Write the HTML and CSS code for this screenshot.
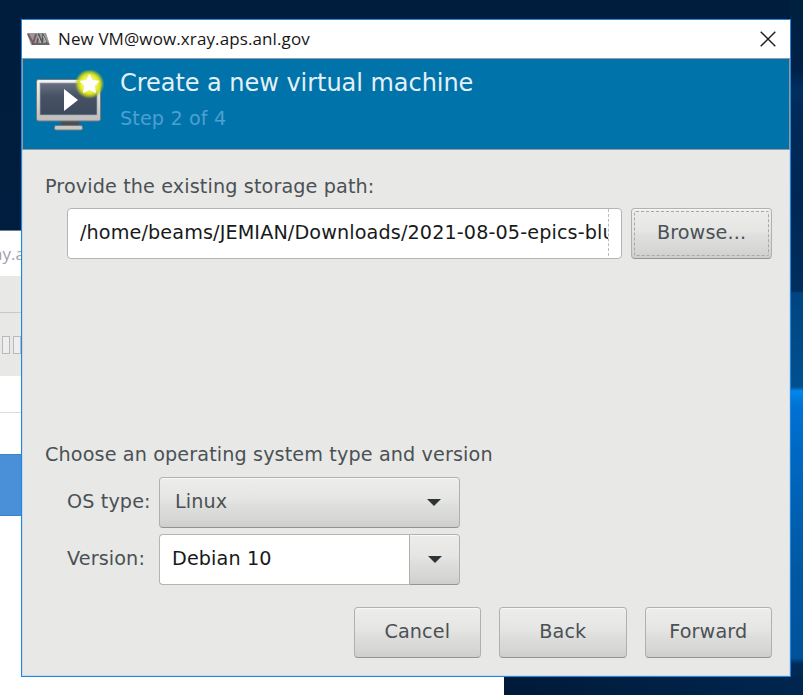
FILE: index.html
```
<!DOCTYPE html>
<html lang="en">
<head>
<meta charset="utf-8">
<title>New VM</title>
<link rel="stylesheet" href="styles.css">
</head>
<body>
<div class="desktop">
  <div class="back-window">
    <div class="back-title">ay.a</div>
    <div class="back-menu"></div>
    <div class="back-tools"><i></i><i></i></div>
    <div class="back-head"></div>
    <div class="back-gap"></div>
    <div class="back-selected"></div>
  </div>
  <main class="dialog">
    <div class="titlebar">
      <svg class="app-icon" width="24" height="14" viewBox="0 0 24 14">
        <path d="M0 1H19L23 13H4Z" fill="#999"/>
        <path d="M1 2L6 11L9 2" fill="none" stroke="#7c5a60" stroke-width="2"/>
        <path d="M10 11L12 3L15 11L16 3L20 11M5 12H22" fill="none" stroke="#555" stroke-width="1.5"/>
        <path d="M11 4L14 11M16 4L19 10" stroke="#c8c8c8" stroke-width="1"/>
      </svg>
      <span class="title-text">New VM@wow.xray.aps.anl.gov</span>
      <svg class="close" width="16" height="16" viewBox="0 0 16 16"><path d="M.7.7L15.3 15.3M15.3.7L.7 15.3" stroke="#1c1c1c" stroke-width="1.4"/></svg>
    </div>
    <header class="banner">
      <svg class="vm-icon" width="70" height="64" viewBox="0 0 70 64">
        <defs>
          <radialGradient id="glow"><stop offset=".45" stop-color="#f0f46a"/><stop offset=".66" stop-color="#dfe51c"/><stop offset=".8" stop-color="#c3d31e" stop-opacity=".75"/><stop offset="1" stop-color="#8dba38" stop-opacity="0"/></radialGradient>
          <linearGradient id="frame" x2="0" y2="1"><stop offset="0" stop-color="#f5f5f5"/><stop offset="1" stop-color="#bcbcbc"/></linearGradient>
          <linearGradient id="screen" x2="0" y2="1"><stop offset="0" stop-color="#687181"/><stop offset=".4" stop-color="#475365"/><stop offset="1" stop-color="#3d495c"/></linearGradient>
        </defs>
        <path d="M25 51H43V57H25Z" fill="#4d4f50"/>
        <rect x="18.500" y="55.500" width="28" height="4.500" rx="1.500" fill="#c8c8c8" stroke="#777"/>
        <rect x=".5" y="9.500" width="64" height="41.500" rx="2" fill="url(#frame)" stroke="#77797a"/>
        <rect x="4" y="13" width="57" height="32" fill="url(#screen)" stroke="#a0a5ac" stroke-width=".7"/>
        <path d="M28 19V41L42 30Z" fill="#fff"/>
        <circle cx="53.500" cy="14" r="15" fill="url(#glow)"/>
        <path d="M53.500 4.500L56.400 10.500L63 11.300L58.200 16L59.500 22.500L53.500 19.500L47.500 22.500L48.800 16L44 11.300L50.600 10.500Z" fill="#fff" stroke="#fff" stroke-width="1" stroke-linejoin="round"/>
      </svg>
      <div class="banner-copy"><h1>Create a new virtual machine</h1><p>Step 2 of 4</p></div>
    </header>
    <section class="content">
      <div class="caption">Provide the existing storage path:</div>
      <div class="path-row">
        <div class="entry path"><span class="clip">/home/beams/JEMIAN/Downloads/2021-08-05-epics-blue</span></div>
        <div class="button focused">Browse...</div>
      </div>
      <div class="caption os-caption">Choose an operating system type and version</div>
      <div class="field"><span class="label">OS type:</span><div class="button select"><span>Linux</span><svg width="14" height="7" viewBox="0 0 14 7"><path d="M0 0H14L7 7Z" fill="#2e3436"/></svg></div></div>
      <div class="field"><span class="label">Version:</span><div class="entry version">Debian 10</div><div class="button drop"><svg width="14" height="7" viewBox="0 0 14 7"><path d="M0 0H14L7 7Z" fill="#2e3436"/></svg></div></div>
      <div class="actions"><div class="button">Cancel</div><div class="button">Back</div><div class="button">Forward</div></div>
    </section>
  </main>
</div>
</body>
</html>
```
FILE: styles.css
```
* { box-sizing: border-box; }
body { margin: 0; font: 19.2px/22px "DejaVu Sans", sans-serif; letter-spacing: .12px; color: #4b5154; }
.desktop {
  position: relative; width: 803px; height: 695px; overflow: hidden;
  background:
    linear-gradient(#001d3d, #001f42) 0 0 / 790px 695px no-repeat,
    linear-gradient(#00203f 0, #002048 70px, #00305f 90px, #002a58 110px, #002753 200px, #002e5e 291px, #004580 293px, #00508f 387px, #0088ee 391px, #0072d4 405px, #0068c4 450px, #0058a2 570px, #00529a 658px, #002b56 664px, #00264c 695px);
}
.desktop::after { content: ""; position: absolute; left: 504px; top: 677px; width: 299px; height: 18px; background: linear-gradient(90deg, #001a38, #00264f); }
.back-window { position: absolute; left: 0; top: 230px; width: 504px; height: 465px; background: #fff; border-top: 1px solid #747d88; }
.back-title { height: 45px; padding-top: 13px; font: 17px/20px "Open Sans", sans-serif; letter-spacing: 0; color: #a1a1a9; margin-left: -7px; }
.back-menu { height: 37px; background: #e8e8e7; border-bottom: 1px solid #c9c9c9; }
.back-tools { height: 63px; background: #e8e8e7; display: flex; gap: 3px; padding: 23px 0 0 2px; }
.back-tools i { width: 8px; height: 18px; border: 1px solid #b9b9b9; background: #eee; }
.back-head { height: 37px; border-bottom: 1px solid #ddd; }
.back-gap { height: 41px; }
.back-selected { height: 62px; background: #4a90d9; border: 1px solid #3e82c9; border-width: 1px 0; }
.dialog { position: absolute; left: 21px; top: 19px; width: 770px; height: 658px; background: #e8e8e7; border: 1px solid #2386d8; box-shadow: inset 0 0 0 1px #c3dcf1; z-index: 1; }
.titlebar { height: 38px; background: #fff; display: flex; align-items: center; padding: 0 14px 0 5px; }
.app-icon { margin-right: 7px; }
.title-text { font: 17px/22px "Open Sans", sans-serif; letter-spacing: .11px; margin-top: -1px; color: #171717; white-space: nowrap; }
.close { margin-left: auto; margin-top: -1px; }
.banner { height: 92px; background: #0073aa; border: 1px solid #949b9f; display: flex; padding: 11px 0 0 13px; }
.vm-icon { margin-right: 14px; }
h1, p { margin: 0; font-weight: 400; white-space: nowrap; }
h1 { font-size: 24px; line-height: 28px; letter-spacing: -.04px; color: #e4f0f5; margin-top: -1px; }
.banner-copy p { line-height: 22px; margin-top: 11px; color: #4da0d0; }
.content { padding: 26px 18px 0 23px; }
.caption { height: 22px; white-space: nowrap; }
.path-row { display: flex; gap: 9px; padding-left: 22px; margin-top: 10px; }
.entry, .button { height: 51px; border: 1px solid #b4b4b1; border-radius: 4px; display: flex; align-items: center; padding-bottom: 2px; }
.entry { background: #fff; color: #171a1b; }
.path { width: 555px; padding-left: 12px; }
.clip { width: 529px; height: 47px; line-height: 47px; overflow: hidden; white-space: nowrap; border-right: 1px dashed #bbb; }
.button { justify-content: center; background: linear-gradient(#ededec, #e5e5e4 45%, #dfdfde 55%, #d6d6d5 84%, #cececd); border-color: #b2b2af #b0b0ad #949491; box-shadow: inset 0 1px #f8f8f8; }
.focused { width: 141px; position: relative; }
.focused::after { content: ""; position: absolute; inset: 2px; border: 1px dashed #a8a8a6; border-radius: 2px; }
.os-caption { margin-top: 185px; margin-bottom: 11px; }
.field { display: flex; padding-left: 22px; height: 57px; }
.label { width: 92px; line-height: 50px; white-space: nowrap; }
.select { width: 301px; justify-content: space-between; padding: 0 18px 2px 15px; }
.field .button svg { position: relative; top: 1px; }
.version { width: 250px; padding-left: 12px; border-right: 0; border-radius: 4px 0 0 4px; }
.drop { width: 51px; border-radius: 0 4px 4px 0; }
.actions { display: flex; justify-content: flex-end; gap: 18px; margin-top: 16px; }
.actions .button { width: 127.500px; }
```
